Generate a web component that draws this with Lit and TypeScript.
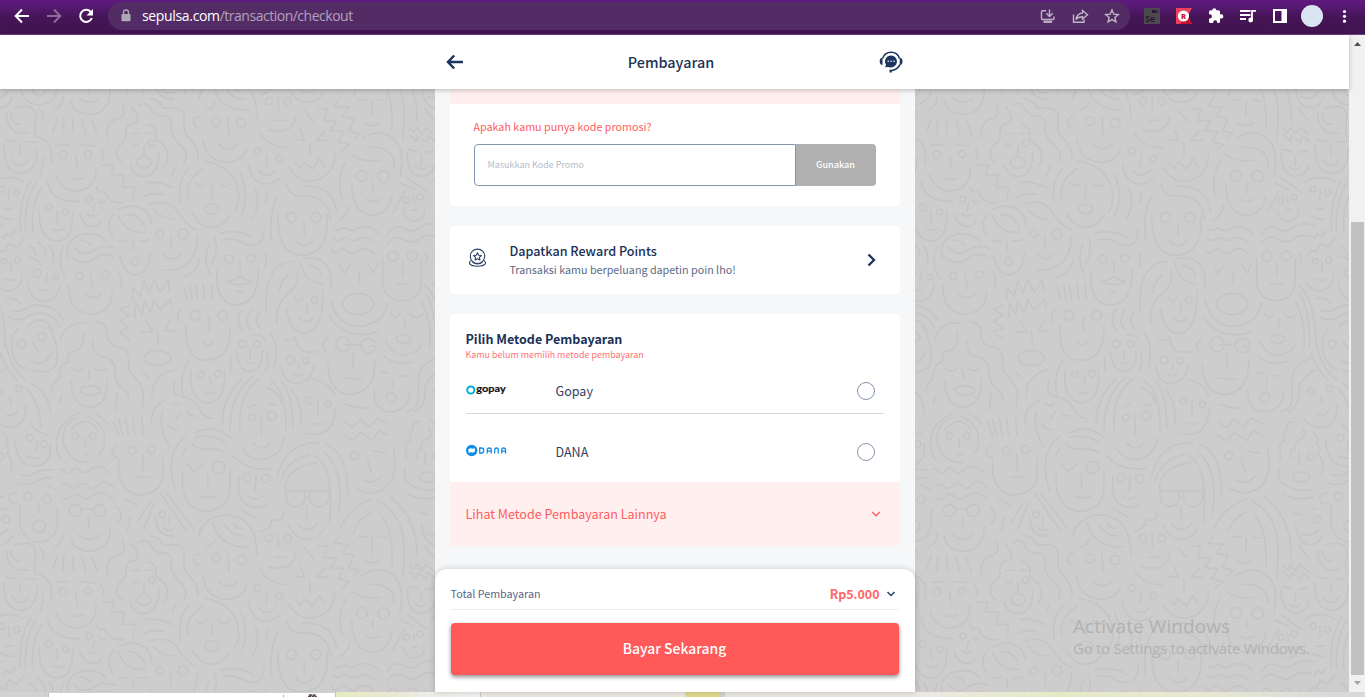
import { LitElement, html, svg, css } from "lit";
import { customElement } from "lit/decorators.js";

type Dot = [number, number, number, number?];

// Doodle wallpaper tile, 1311 x 1311 units, drawn at one third scale.
const UPPER = [
  "M42 70Q100 50 108 90Q100 140 108 155Q150 165 155 205L154 235M20 85Q20 150 85 144M33 85Q35 120 64 118M118 73Q132 85 131 108M18 165l28 5M77 171h30M60 183v29M36 222Q60 262 86 222M12 180Q10 265 63 265Q112 260 111 193M129 218Q130 245 120 268",
  "M172 102L158 142M192 100L189 146M218 101L220 145M246 105L257 148M277 107L293 150M172 181L207 178M241 178L285 183M228 210L231 250M215 281Q235 287 250 279M167 268Q185 318 228 318Q290 315 288 248M303 190Q316 208 305 226M142 290Q150 350 237 350",
  "M366 54Q382 90 355 100Q315 110 323 158M395 67Q425 100 405 115Q375 115 378 150Q380 170 360 180Q335 210 365 233M416 62Q440 45 455 75Q465 95 490 93Q520 95 513 135Q515 160 550 190Q565 210 553 232M451 40Q480 45 490 70Q545 60 553 90Q550 130 555 145Q600 190 593 222M443 119Q475 125 467 163Q505 185 503 215Q503 230 493 242M395 146Q405 142 417 146M440 146Q452 142 463 146M393 175Q405 190 417 175M432 182v28M391 240Q400 275 432 275Q478 270 476 203M529 242L516 272",
  "M307 240L343 241L334 269L373 270L367 307L405 307L398 347",
  "M645 52Q640 70 620 75M684 98L687 150M599 95Q580 95 581 112Q583 130 599 129M656 178Q685 205 713 178M608 163Q620 232 685 232Q730 228 740 190M597 40Q597 25 605 14M470 14Q480 42 520 40M490 14Q500 30 520 22",
  "M835 37v38M824 106h33M805 135Q880 150 887 95M780 143Q810 190 866 188M802 210L798 248M776 258Q802 285 828 255M746 240Q755 297 800 297Q825 293 838 281",
  "M912 76L940 109M901 134L914 166L886 163M975 139L949 166H986M930 175v36M886 232L902 251L911 230L938 252L957 221L974 246M867 245Q890 290 935 288Q1000 280 1005 207",
  "M953 73L982 71L971 106L1010 109L991 137L1031 140L1014 170L1048 179L1025 198M1018 40L1003 64L1046 67L1026 94L1062 100L1045 137L1077 146L1062 160",
  "M1075 43L1102 45M1134 45L1160 48M1117 47L1115 94M1090 114Q1115 132 1138 114M1275 70Q1285 90 1305 108",
  "M1087 160Q1125 135 1165 150Q1220 180 1200 275M1103 188Q1160 180 1180 220L1182 248M1056 208Q1090 235 1141 225M1118 292v27M1099 343Q1120 355 1141 343M1055 297Q1060 390 1118 391Q1165 388 1176 332M1038 230Q1008 280 1026 338",
  "M1229 130L1241 143L1251 127L1264 147L1278 128L1305 148M1229 151L1251 170V152L1280 172L1285 152L1305 168M1225 193L1252 200M1275 202L1300 197M1264 213v27M1247 246Q1264 262 1280 246M1222 203Q1220 270 1264 274Q1300 270 1304 240",
  "M1222 278L1282 322M1202 294L1242 313M1214 319L1179 384M1240 336L1243 356M1236 376L1252 374M1211 375Q1215 408 1243 408Q1275 405 1273 375",
  "M-18 292Q0 277 30 277Q50 277 70 290M27 312V346M12 373L40 371M2 393Q15 403 39 403M93 288Q55 340 62 440M108 293Q70 350 77 440M125 307Q90 370 99 442",
  "M170 380L173 416M155 431Q175 440 195 430M118 375Q115 465 173 468Q220 465 218 380M284 355L279 380M263 387Q275 397 292 391M240 387Q250 425 285 424Q300 420 305 410M288 305Q290 325 313 320Q330 360 370 352M298 345L303 355L314 350",
  "M355 374Q405 350 440 380Q455 400 455 417M340 387Q315 415 338 454M383 388Q425 390 436 430M355 390Q375 445 435 443M355 468Q365 472 380 466M417 467Q430 470 445 464M398 470L401 496M360 515Q375 570 407 569Q450 560 451 503",
  "M439 292Q480 288 516 308M430 335Q460 320 489 329M447 359Q510 335 540 390Q570 430 592 435M462 374Q485 402 521 402M513 455V490M490 508Q515 535 540 508M487 556Q590 560 592 455M599 520Q590 565 549 577",
  "M612 228Q710 245 716 330Q716 365 703 380M608 252Q550 290 565 344M565 250Q530 290 541 354M721 266Q750 330 723 394M765 310Q785 350 758 399M587 293Q602 312 618 295M655 295Q673 312 690 297M635 303v37M577 385Q600 427 635 427Q670 425 690 390M802 322L797 357",
  "M861 295Q865 335 910 333Q985 330 992 405M907 303Q1000 300 1010 380M1049 362Q1045 390 1016 405M832 333Q805 390 815 466M913 415v36M887 467Q912 497 940 467M834 387Q830 510 908 511Q990 505 981 387",
  "M1005 432Q1015 440 1025 432T1045 435Q1060 440 1075 428Q1105 415 1137 445M1000 460Q1012 472 1025 462T1050 465Q1065 470 1080 460Q1100 455 1125 473M995 493Q1000 515 1020 495Q1030 487 1045 500Q1060 515 1075 497Q1100 482 1123 508M1162 449Q1180 415 1210 430Q1235 445 1255 430Q1280 408 1320 421M1162 478Q1180 445 1210 463Q1240 480 1260 460Q1280 445 1311 455",
  "M10 462L18 446L33 453L46 437M-10 515L0 497L16 499L26 475L51 486L72 460M34 531L32 560M12 582Q28 588 43 584M-12 595Q0 620 30 618Q65 610 67 568",
  "M113 470Q140 490 136 513M148 482Q165 500 160 535M84 483Q105 485 108 510M82 517Q115 515 122 540M141 565L137 594M120 612Q130 620 143 615M83 592Q90 650 135 648Q175 645 180 596",
  "M205 522Q190 455 260 446Q300 445 318 468M190 483Q170 530 195 580M223 487Q245 515 275 500Q310 475 345 490M216 517Q245 545 280 522Q310 500 340 515M240 465Q260 465 272 482M272 568L279 609M253 626Q280 650 303 626M206 600Q205 685 275 687Q340 680 337 618M357 560Q368 580 362 610",
  "M398 645V608L421 633L432 588L447 623L462 583L481 623L505 585L509 622M405 698L406 652L426 690L432 650L452 683L462 643L480 675L512 643L516 672M388 662L358 672L387 690L358 710L388 730L358 740L388 765M438 707L458 740L425 742M510 706L493 738H526M473 740L476 780",
  "M551 608L560 643M569 600L576 643M586 597L593 643M609 597L615 643M634 597L636 643M628 695v45M609 772Q625 790 641 772M558 718Q550 825 622 826Q695 820 689 728M542 675Q525 690 537 710",
  "M720 530L721 563M680 590Q707 586 720 573Q735 586 755 590Q720 608 680 590ZM709 617Q720 623 729 618M651 557Q645 655 708 660Q780 655 775 548M661 445Q715 430 760 458M669 465Q700 455 730 475Q790 500 793 432M627 477Q608 520 629 565M642 453Q660 490 634 538M796 503Q803 530 795 550",
  "M798 678Q790 535 880 528M902 533Q910 590 970 597M922 540Q960 545 965 575M912 520Q1000 510 993 607M893 556Q898 600 860 630Q825 660 831 716M864 570Q838 590 837 624M885 636Q897 665 908 636M921 655v30M896 694Q920 725 941 696M859 672Q870 745 915 745Q970 740 969 615",
  "M1020 540L1033 566L1049 540M1104 538L1119 564L1133 537M1078 562V600M993 645Q1010 722 1080 724Q1155 715 1162 653M987 692Q1020 748 1080 749Q1115 748 1133 738",
  "M1208 533v41M1189 598H1226M1148 520V590Q1150 645 1208 647Q1262 645 1264 590V520M1275 506Q1290 520 1276 532M1275 598Q1330 660 1325 785M1278 625Q1312 690 1306 790M1265 650Q1300 720 1288 792",
  "M1170 683Q1185 710 1200 685M1230 685Q1250 710 1268 687M1214 700v31M1157 765Q1175 810 1210 810Q1255 805 1263 780M1153 815Q1190 845 1238 830",
  "M18 640Q45 638 62 655M28 697Q60 715 90 690Q150 670 179 723M30 675Q60 685 90 663Q160 650 190 705M84 725Q115 690 145 715L160 735M52 732Q20 765 45 825Q55 845 77 852M145 725Q185 790 165 845Q140 870 96 855M98 772L116 798M94 828Q130 850 155 802M18 775Q30 850 76 885M0 803Q15 850 50 885",
  "M180 766Q195 710 258 714M250 740Q255 795 220 798Q200 800 205 830Q175 840 178 880Q160 890 155 917M278 763Q275 810 310 815Q350 825 345 870Q350 900 370 910Q388 925 385 946M290 709Q325 715 322 760Q330 785 370 790Q390 800 386 855Q430 900 430 930L427 965M215 850Q232 867 250 850M279 848Q300 865 318 850M265 856L269 886M213 888Q215 965 272 967Q325 960 322 880M185 930L178 955M350 925Q352 955 345 975",
  "M425 861L445 879M521 855Q455 870 456 937M565 827Q535 880 550 938M630 875L633 899M615 925H645M573 855Q565 950 625 954Q680 945 673 857",
  "M728 674Q700 705 728 735M754 674Q728 710 754 735M780 682Q758 705 782 732M755 752Q785 745 795 767M751 795v26M741 833Q750 838 761 835M709 797Q715 860 750 860Q790 855 786 797M692 817V857M799 800Q812 830 795 860M812 745Q840 790 823 843",
  "M852 760Q870 775 886 755Q890 810 948 800M896 836v15M880 865Q895 882 910 865M845 843Q850 895 893 895Q940 890 942 835M1035 779H1082M1107 783H1120M1059 806V849M1030 879L1086 882M984 835Q985 925 1050 928Q1125 925 1125 828M983 760Q958 775 975 797",
  "M1143 860L1167 865M1199 872L1224 873M1180 880L1177 907M1122 913Q1120 980 1173 981Q1225 975 1229 925M1318 815Q1255 840 1255 880V945Q1250 975 1222 978M1323 855Q1275 880 1275 920Q1278 960 1245 980M28 935L34 960M94 895Q150 930 150 985M80 910Q120 950 123 1028",
  "M525 887Q515 910 527 930Q590 940 600 975Q612 998 637 1000M516 955Q530 970 540 955M727 880Q665 940 667 1015M755 878Q690 930 690 1035M776 882Q712 930 720 1035M812 888Q860 920 858 1035M800 908Q838 920 845 955M845 890Q880 930 878 1030M875 915Q910 960 902 1020M943 883Q990 895 1004 930M954 945V989",
];
const UPPER_DOTS: Dot[] = [
  [189, 209, 12], [264, 207, 10], [455, 175, 10], [432, 233, 22, 17], [648, 109, 13], [724, 114, 14], [807, 48, 11], [863, 48, 11],
  [773, 198, 10], [838, 220, 10], [1086, 273, 16], [1151, 274, 17], [1220, 346, 9], [1260, 336, 9], [6, 313, 9], [50, 323, 9],
  [146, 367, 10], [197, 381, 9], [267, 343, 9], [404, 529, 11], [479, 446, 11], [549, 447, 15], [635, 372, 21, 15],
  [874, 397, 15], [948, 397, 15], [13, 529, 8], [53, 525, 9], [112, 565, 12], [168, 576, 8], [238, 573, 11], [316, 569, 11],
  [472, 819, 40, 22], [585, 691, 15], [668, 691, 15], [687, 522, 12], [753, 520, 12], [944, 644, 10], [1075, 657, 47, 31],
  [1179, 514, 15], [1237, 513, 15], [1211, 762, 22, 12], [64, 777, 12], [125, 755, 12], [272, 916, 30, 14], [603, 868, 10],
  [653, 866, 10], [728, 777, 11], [770, 777, 10], [871, 825, 12], [918, 827, 9], [1029, 778, 22], [1105, 782, 22],
  [1173, 937, 15], [0, 920, 10], [56, 911, 10], [927, 947, 10], [985, 958, 9],
];
// Lower part of the tile, in its own coordinates 945 units down.
const LOWER = [
  "M940 70Q955 75 970 71M1007 25Q1000 105 940 104L912 99M-20 60Q0 82 35 82Q80 75 78 15M20 45Q38 52 52 32",
  "M488 33Q475 80 508 140M453 68Q455 15 497 0M503 72Q515 92 535 88M543 35L527 60M562 35Q570 50 588 48M748 22Q758 18 768 13M808 12L828 16M784 45v60M757 128Q785 160 811 128M725 142Q745 178 785 179Q845 170 851 113",
  "M1030 65L1059 83L1081 57L1109 82L1132 54L1170 73M1030 106L1059 122L1081 97L1118 122L1137 92L1163 106M1035 12Q1070 25 1102 25",
  "M1260 65Q1235 65 1237 95Q1220 95 1235 120Q1215 125 1217 148Q1225 175 1213 180M1285 85Q1300 105 1283 117Q1260 120 1263 150Q1250 140 1250 175",
  "M1119 152L1158 160M1101 174L1114 219M1087 240Q1115 257 1143 230M1065 263Q1105 290 1145 270Q1200 240 1180 143M1275 157v36M1215 205Q1210 230 1220 247M1227 250Q1270 280 1310 268M1227 282Q1265 305 1320 290M1257 338L1284 345",
  "M112 122L107 153M82 170Q98 176 115 174M44 120Q50 198 105 199Q155 195 151 130M91 70Q110 100 146 104M10 102Q28 115 16 130Q35 145 20 160Q45 185 30 220",
  "M237 38Q150 80 175 165L184 180M285 40Q320 60 322 72M230 55Q185 70 190 130Q210 190 265 188M258 48Q315 70 314 125Q312 150 298 163M212 90Q235 62 262 65Q288 75 292 92M255 115L256 142M250 163H267",
  "M177 207Q190 205 195 218Q205 225 218 207Q232 198 242 215Q260 225 275 205Q300 190 331 220M188 255Q202 245 212 263Q228 270 240 253Q255 245 270 263Q285 270 297 250Q320 235 340 265M188 293Q202 305 218 285Q232 278 245 292Q262 305 280 285Q310 270 340 297M61 223Q90 235 110 215Q130 207 158 210M52 248Q90 262 115 240Q135 232 158 233M142 255Q155 260 171 271",
  "M340 65L356 108M356 57L368 107M377 55L385 107M398 55L404 106M425 52L429 106M429 163V211M410 232H449M356 178V220Q370 285 425 285Q490 275 489 220V175M352 137Q333 140 337 160Q342 172 354 172",
  "M557 110Q490 160 527 272M557 145L545 165M583 100Q640 70 691 112M588 112Q640 100 676 130M576 132Q590 150 630 148Q660 145 675 160M562 194L584 214L608 193M623 220v42M602 290Q625 297 649 290M547 218V260Q560 334 622 334Q690 325 690 260V210",
  "M698 167Q740 215 815 205M768 225L766 275M747 290Q770 305 788 288M718 227Q705 320 768 322Q790 320 800 314",
  "M957 128Q855 125 832 233M930 163Q860 180 843 243M951 188Q860 200 856 263M943 166Q1005 200 988 365M978 132Q1045 160 1043 288M973 158Q1035 210 1015 340M857 272H986M858 272V290Q860 318 885 320Q915 318 915 290V272M929 272V290Q930 318 957 320Q985 318 986 290V272M915 290h14M921 320V355M893 372Q920 405 952 372M865 372Q885 418 920 419Q960 415 970 388",
  "M850 340Q848 370 815 358Q815 390 780 395M717 325L763 353M1116 298Q1050 320 1023 383M1116 335Q1070 360 1061 398M1142 343Q1180 390 1176 497M1130 300Q1210 340 1213 450L1209 532M1172 290Q1255 360 1251 472",
  "M115 307L117 337M60 313V370Q70 425 118 426Q170 420 172 370V325M50 280Q25 275 27 295Q30 315 47 310M0 328L18 325M0 405Q15 400 22 388M-47 370Q-40 435 0 435Q30 430 35 405M-30 400Q0 415 20 388",
  "M244 330Q262 322 280 330M266 350v35M237 405Q270 430 298 405M211 410Q220 453 270 454Q330 450 331 380M350 320Q375 345 352 370M371 295L413 317M189 400Q190 430 164 441",
  "M452 305L412 366M463 310L430 388M391 350L382 392M482 280L557 390M499 278L580 385M506 352L508 375M495 388Q510 394 521 387M467 352Q470 410 520 410",
  "M597 410Q610 350 675 345Q770 345 771 465M640 370Q660 445 746 440M675 372Q695 410 735 408M700 370Q710 388 724 384",
];
const LOWER_DOTS: Dot[] = [
  [755, 53, 10], [815, 47, 14], [1064, 167, 12], [1282, 231, 25, 15], [89, 114, 10], [131, 132, 10], [0, 170, 11],
  [226, 107, 10], [278, 107, 10], [397, 152, 12], [454, 148, 12], [656, 203, 19], [741, 233, 12], [797, 236, 12],
  [83, 290, 12], [141, 298, 12], [118, 379, 19], [18, 358, 11], [226, 331, 18], [298, 331, 18], [487, 344, 9],
];

const dots = (list: Dot[]) => list.map(([x, y, rx, ry]) => svg`<ellipse cx=${x} cy=${y} rx=${rx} ry=${ry ?? rx} />`);
const TILE = 1311;

@customElement("doodle-wallpaper")
export class DoodleWallpaper extends LitElement {
  static styles = css`
    :host { display: block; background: #cdcdcd; overflow: hidden; }
    svg { display: block; }
    .ink { fill: none; stroke: #c5c5c5; stroke-width: 5; stroke-linecap: round; stroke-linejoin: round; }
  `;
  render() {
    const spots = [-1, 0, 1].flatMap((r) => [-1, 0, 1, 2, 3].map((c) => [c * TILE, r * TILE]));
    return html`<svg width="1349" height="657" viewBox="0 35 1349 657">
      <defs>
        <g id="tile">
          <path d=${UPPER.join("")} />${dots(UPPER_DOTS)}
          <g transform="translate(0 945)"><path d=${LOWER.join("")} />${dots(LOWER_DOTS)}</g>
        </g>
      </defs>
      <g class="ink" transform="translate(0 85) scale(.33333)">
        ${spots.map(([x, y]) => svg`<use href="#tile" x=${x} y=${y} />`)}
      </g>
    </svg>`;
  }
}

@customElement("browser-bar")
export class BrowserBar extends LitElement {
  static styles = css`
    :host {
      display: flex; align-items: flex-start; box-sizing: border-box; height: 35px;
      background: linear-gradient(#60187f 0, #5b1979 4px, #451556 17px, #421450 33px);
      border-bottom: 1px solid #6b427a;
      font-family: "Open Sans", sans-serif;
    }
    svg { display: block; flex: none; }
    .nav { width: 108px; }
    .omni { display: flex; width: 1022px; height: 28px; margin-top: 2px; border-radius: 14px; background: #532c65; }
    .lock { margin: 7px 0 0 12px; }
    .url { flex: 1; margin-left: 10px; line-height: 28px; font-size: 14px; letter-spacing: -0.49px; color: #b3a0bd; white-space: nowrap; }
    .url b { color: #fff; font-weight: 400; letter-spacing: -0.34px; }
    .tools { width: 92px; }
  `;
  render() {
    return html`
      <svg class="nav" height="34" viewBox="0 0 108 34" fill="none" stroke="#fff" stroke-width="2">
        <path d="M29 16H16M22 9.5L15.7 16L22 22.5" />
        <path stroke="#8d6c9b" d="M47 16H60M54 9.5L60.300 16L54 22.500" />
        <path d="M90.600 11.800A6 6 0 1 0 91.800 18" /><path fill="#fff" stroke="none" d="M93 9V15.500H86.500Z" />
      </svg>
      <div class="omni">
        <svg class="lock" width="12" height="14" viewBox="0 0 12 14"><rect x="1.500" y="5" width="9" height="7.300" rx="1" fill="#b0a8b8" /><path d="M3.500 5.500V3.500a2.500 2.500 0 0 1 5 0V5.500" fill="none" stroke="#b0a8b8" stroke-width="1.300" /></svg>
        <div class="url"><b>sepulsa.com</b>/transaction/checkout</div>
        <svg class="tools" height="28" viewBox="1038 2 92 28" fill="none" stroke="#c0b4c5" stroke-width="1.400">
          <path d="M1046 10.700H1042.500a1 1 0 0 0-1 1V18.500a1 1 0 0 0 1 1H1053a1 1 0 0 0 1-1V16.500M1049.500 9.500V16M1046.300 13.300L1049.500 16.500L1052.700 13.300" /><path d="M1043.500 21.800H1052" stroke-width="2.200" />
          <path d="M1073.500 14.500V22.300H1084V19.500M1082.500 10.500L1087.500 14.700L1082.500 19V16.700C1079.500 16.700 1077.500 17.500 1076 19.700C1076.500 16 1078.500 13.500 1082.500 13Z" />
          <path d="M1112 10L1113.800 14.100L1118.300 14.500L1114.900 17.500L1115.900 21.900L1112 19.600L1108.100 21.900L1109.100 17.500L1105.700 14.500L1110.200 14.100Z" />
        </svg>
      </div>
      <svg width="235" height="34" viewBox="1130 0 235 34">
        <rect x="1144" y="8" width="16" height="16" fill="#4c4a4e" /><rect x="1152" y="10" width="4" height="3" fill="#2e1739" /><path d="M1156 12l2-2v3z" fill="#2e1739" />
        <text x="1145" y="22" font-size="9" font-weight="700" fill="#2e1739">Se</text>
        <path d="M1176 8H1192L1187.500 16L1192 24H1176Z" fill="#ee3f5c" /><path d="M1187.500 16L1192 24H1180Z" fill="#c8102e" /><circle cx="1183.500" cy="16" r="5.600" fill="#fff" />
        <text x="1181" y="19" font-size="7.500" font-weight="800" fill="#d01531">R</text>
        <path fill="#fff" d="M1221.300 14.300H1220V11.700a1.500 1.500 0 0 0-1.500-1.500H1216.300a2 2 0 0 0-4 0H1210.500a1.500 1.500 0 0 0-1.500 1.500V14.300h.8a2.100 2.100 0 0 1 0 4.200H1209V21.600a1.500 1.500 0 0 0 1.500 1.500H1213.200v-.8a2 2 0 0 1 4 0v.8H1218.500a1.500 1.500 0 0 0 1.500-1.500V18.500h1.300a2.100 2.100 0 0 0 0-4.200Z" />
        <g fill="none" stroke="#fff" stroke-width="1.800"><path d="M1240 11H1250.500M1240 15H1250.500M1240 19H1246M1252 20V10.800H1256" /></g><circle cx="1250.700" cy="20" r="2.400" fill="#fff" />
        <rect x="1274" y="10" width="12" height="12" fill="none" stroke="#fff" stroke-width="2" /><rect x="1281.500" y="9" width="5.500" height="14" fill="#fff" />
        <circle cx="1312" cy="16" r="11" fill="#dbe5f1" />
        <g fill="#fff"><circle cx="1344.500" cy="11.500" r="1.600" /><circle cx="1344.500" cy="16.300" r="1.600" /><circle cx="1344.500" cy="21.200" r="1.600" /></g>
      </svg>`;
  }
}

@customElement("checkout-panel")
export class CheckoutPanel extends LitElement {
  static styles = css`
    :host { display: flex; flex-direction: column; width: 480px; height: 603px; background: #f5f7f9; color: #1b3157; }
    svg { display: block; flex: none; }
    .scroll { height: 480px; padding: 0 15px; box-sizing: border-box; display: flex; flex-direction: column; gap: 20px; }
    .card { background: #fff; border-radius: 4px; overflow: hidden; }
    .promo { height: 117px; border-radius: 0 0 4px 4px; }
    .strip { height: 15px; background: #ffefee; }
    .ask { margin: 13px 0 0 24px; height: 20px; line-height: 20px; font-size: 10.74px; color: #ff5c60; }
    .code { display: flex; margin: 7px 24px 0; height: 42px; box-sizing: border-box; }
    .field { width: 322px; box-sizing: border-box; border: 1px solid #8494ae; border-radius: 4px 0 0 4px; padding-left: 13px; line-height: 39px; font-size: 9px; color: #b4bccb; }
    .use { flex: 1; background: #b0b0b0; border-radius: 0 4px 4px 0; color: #fff; text-align: center; line-height: 41px; font-size: 9.1px; font-weight: 500; }
    .reward { display: flex; height: 68px; }
    .medal { margin: 22px 0 0 18px; }
    .points { flex: 1; margin: 15px 0 0 23px; }
    .title { font-size: 12.6px; line-height: 20px; font-weight: 500; }
    .sub { font-size: 10.74px; line-height: 17px; color: #5c6983; }
    .go { margin: 27px 23px 0 0; }
    .methods { height: 232px; border-radius: 4px 4px 0 0; }
    .head { margin: 15px 16px 0; font-size: 12.5px; line-height: 20px; font-weight: 700; }
    .warn { margin: 0 16px; font-size: 8.95px; line-height: 12px; color: #ff7377; }
    .rows { margin: 0 16px; }
    .row { display: flex; align-items: center; height: 50px; padding-top: 3px; box-sizing: border-box; }
    .row + .row { margin-top: 11px; }
    .first { border-bottom: 1px solid #d6d8dc; height: 53px; padding-top: 7px; }
    .logo { width: 90px; }
    .name { flex: 1; font-size: 12.55px; line-height: 20px; color: #33415f; }
    .radio { width: 18px; height: 18px; box-sizing: border-box; border: 1px solid #8592ac; border-radius: 50%; margin-right: 9px; }
    .more { display: flex; align-items: center; justify-content: space-between; height: 64px; padding: 0 19px 0 16px; background: #ffefee; color: #ff5c60; font-size: 12.55px; margin-top: 7px; }
    .more span { padding-bottom: 2px; }
    .pay { height: 123px; box-sizing: border-box; padding: 0 16px; background: #fff; border-radius: 12px 12px 0 0; box-shadow: 0 0 6px rgba(0, 0, 0, 0.2); }
    .total { display: flex; align-items: center; height: 41px; padding-top: 9px; box-sizing: border-box; border-bottom: 1px solid #ececef; }
    .label { flex: 1; font-size: 10.74px; color: #566789; }
    .sum { font-size: 12.4px; font-weight: 700; color: #ff6466; margin-right: 6px; }
    .total svg { margin-right: 3px; }
    .submit { height: 52px; margin-top: 13px; border-radius: 4px; background: #ff595a; color: #fff; line-height: 51px; text-align: center; font-size: 13.9px; font-weight: 500; box-shadow: 0 2px 4px rgba(0, 0, 0, 0.45); }
  `;
  render() {
    return html`
      <div class="scroll">
        <section class="card promo">
          <div class="strip"></div>
          <div class="ask">Apakah kamu punya kode promosi?</div>
          <div class="code"><div class="field">Masukkan Kode Promo</div><div class="use">Gunakan</div></div>
        </section>
        <section class="card reward">
          <svg class="medal" width="19" height="20" viewBox="0 0 19 20" fill="none" stroke="#2b416a" stroke-width="1.100">
            <circle cx="9.500" cy="8.300" r="7.200" /><path d="M9.500 4.700L10.700 7.200L13.400 7.500L11.400 9.400L11.900 12.100L9.500 10.800L7.100 12.100L7.600 9.400L5.600 7.500L8.300 7.200Z" stroke-linejoin="round" />
            <path d="M3.200 12.400Q.5 14.500 2 16.200Q3.500 18.200 9.500 18.200Q15.500 18.200 17 16.200Q18.500 14.500 15.800 12.400M4.500 14.200Q9.500 17.500 14.500 14.200" />
          </svg>
          <div class="points"><div class="title">Dapatkan Reward Points</div><div class="sub">Transaksi kamu berpeluang dapetin poin lho!</div></div>
          <svg class="go" width="12" height="14" viewBox="0 0 12 14"><path d="M3.500 1.500L9 7L3.500 12.500" fill="none" stroke="#1b3157" stroke-width="2.300" /></svg>
        </section>
        <section class="card methods">
          <div class="head">Pilih Metode Pembayaran</div>
          <div class="warn">Kamu belum memilih metode pembayaran</div>
          <div class="rows">
            <div class="row first">
              <svg class="logo" height="18" viewBox="0 -1 90 18"><circle cx="4.800" cy="7" r="3.600" fill="none" stroke="#00aed6" stroke-width="2" /><text x="10.300" y="9" font-family="Lato, sans-serif" font-size="10" font-weight="700" textLength="29.500" lengthAdjust="spacingAndGlyphs" fill="#111" stroke="#111" stroke-width=".2">gopay</text></svg>
              <div class="name">Gopay</div><div class="radio"></div>
            </div>
            <div class="row">
              <svg class="logo" height="18" viewBox="0 -.5 90 18"><circle cx="5.700" cy="7" r="5.700" fill="#118eea" /><path d="M2.500 5.800Q4.200 4.500 5.700 5T8.900 4.500V8.300Q7.200 9.300 5.400 8.800T2.500 9.500Z" fill="#fff" />
                <g fill="none" stroke="#118eea" stroke-width="1.300"><path d="M13.700 4.500H15.500Q17.700 4.600 17.700 7T15.500 9.500H13.700ZM21.300 10V6.500Q21.300 4.500 23.300 4.500T25.300 6.500V10M21.300 7.700H25.300M28.700 10V6.500Q28.700 4.500 30.500 4.500T32.300 6.500V10M35.700 10V6.500Q35.700 4.500 37.600 4.500T39.500 6.500V10M35.700 7.700H39.500" /></g></svg>
              <div class="name">DANA</div><div class="radio"></div>
            </div>
          </div>
          <div class="more"><span>Lihat Metode Pembayaran Lainnya</span>
            <svg width="10" height="8" viewBox="0 0 10 8"><path d="M1.200 2L5 5.800L8.800 2" fill="none" stroke="#ff5c60" stroke-width="1.300" /></svg></div>
        </section>
      </div>
      <div class="pay">
        <div class="total"><span class="label">Total Pembayaran</span><span class="sum">Rp5.000</span>
          <svg width="10" height="8" viewBox="0 0 10 8"><path d="M1.500 2L5 5.500L8.500 2" fill="none" stroke="#27446f" stroke-width="1.500" /></svg></div>
        <div class="submit">Bayar Sekarang</div>
      </div>`;
  }
}

@customElement("app-root")
export class AppRoot extends LitElement {
  static styles = css`
    :host { display: grid; grid-template-rows: 35px 657px 5px; width: 1365px; height: 697px; overflow: hidden; font-family: "Noto Sans CJK JP", sans-serif; }
    svg { display: block; }
    .window { display: grid; grid-template-columns: 1349px 16px; }
    .page { display: grid; grid-template: 657px / 1349px; }
    .page > * { grid-area: 1 / 1; }
    .body { display: flex; flex-direction: column; align-items: center; z-index: 1; }
    .column { padding-top: 54px; }
    .bar { z-index: 2; align-self: start; height: 54px; display: flex; justify-content: center; background: #fff; box-shadow: 0 1px 5px rgba(0, 0, 0, 0.25); }
    .inner { width: 480px; display: flex; align-items: center; justify-content: space-between; padding: 0 12px 0 11px; box-sizing: border-box; }
    .heading { font-size: 14.4px; font-weight: 500; color: #1b3157; padding: 0 0 2px 1px; }
    .watermark { z-index: 3; justify-self: end; align-self: end; width: 276px; height: 79px; font-family: "Open Sans", sans-serif; color: #b1b1b1; white-space: nowrap; }
    .big { font-size: 19px; line-height: 27px; letter-spacing: 0.08px; }
    .small { font-size: 15px; line-height: 16px; letter-spacing: -0.27px; }
    .scrollbar { display: flex; flex-direction: column; align-items: center; background: #f1f1f1; }
    .thumb { width: 13px; height: 453px; margin: 170px 0 0 1px; background: #c1c1c1; }
    .under { display: flex; background: #ece9e3; }
    .u1 { width: 48px; background: #d2d2d1; }
    .u2 { width: 288px; border-left: 1px solid #bdbdbd; border-right: 1px solid #bdbdbd; background: #fff; border-top: 1px solid #d0d0d0; box-sizing: border-box; }
    .u3 { width: 144px; background: linear-gradient(90deg, #e6eac0, #e9e8d4 60px, #f0eee9 98px, #f5f4f2); border-right: 1px solid #c8c8c8; }
    .u4 { width: 204px; }
    .u5 { width: 35px; background: #e3da8f; }
    .u6 { width: 5px; background: #d2d1cf; }
    .u7 { flex: 1; background: linear-gradient(90deg, #ece9e4 30%, #e6e9c6 52%, #e8e7d2 75%, #d9d9d9 95%); }
  `;
  render() {
    return html`
      <browser-bar></browser-bar>
      <div class="window">
        <div class="page">
          <doodle-wallpaper></doodle-wallpaper>
          <div class="body"><div class="column"><checkout-panel></checkout-panel></div></div>
          <header class="bar"><div class="inner">
            <svg width="17" height="16" viewBox="0 0 17 16" fill="none" stroke="#1b3560" stroke-width="2.500"><path d="M17 8H2.500M8.200 1.500L2 8L8.200 14.500" /></svg>
            <span class="heading">Pembayaran</span>
            <svg width="24" height="22" viewBox="0 0 24 22"><g fill="none" stroke="#1b3560" stroke-width="1.600"><path d="M3.600 7.500A8.900 8.900 0 0 1 20.600 7.500M21 13.500Q19 18.800 11.500 19.800" /></g>
              <path fill="#1b3560" d="M3.500 6.800V14Q.7 13.800 .7 10.400T3.500 6.800ZM20.700 6.800Q23.500 7 23.500 10.400T20.700 14ZM12.100 4.400a6 6 0 1 1-2.500 11.500L6 16.200L7.100 13.800A6 6 0 0 1 12.100 4.400ZM10.500 18.800H12.800V21.500H10.500Z" />
              <g fill="#fff"><circle cx="9.200" cy="10.300" r=".8" /><circle cx="12.100" cy="10.300" r=".8" /><circle cx="15" cy="10.300" r=".8" /></g></svg>
          </div></header>
          <div class="watermark"><div class="big">Activate Windows</div><div class="small">Go to Settings to activate Windows.</div></div>
        </div>
        <div class="scrollbar">
          <svg width="16" height="17" viewBox="0 0 16 17"><path d="M5 11H12L8.500 7Z" fill="#505050" /></svg>
          <div class="thumb"></div>
          <svg width="16" height="17" viewBox="0 0 16 17"><path d="M5 6H12L8.500 10Z" fill="#a3a3a3" /></svg>
        </div>
      </div>
      <div class="under"><div class="u1"></div>
        <div class="u2"><svg width="284" height="4" viewBox="49 693 284 4"><rect x="283" y="695" width="1" height="2" fill="#c39a86" /><path d="M308 696.500H317M309 695H316" stroke="#5a4150" stroke-width="1.300" stroke-dasharray="3 .6" /></svg></div>
        <div class="u3"></div><div class="u4"></div><div class="u5"></div><div class="u6"></div><div class="u7"></div></div>`;
  }
}
